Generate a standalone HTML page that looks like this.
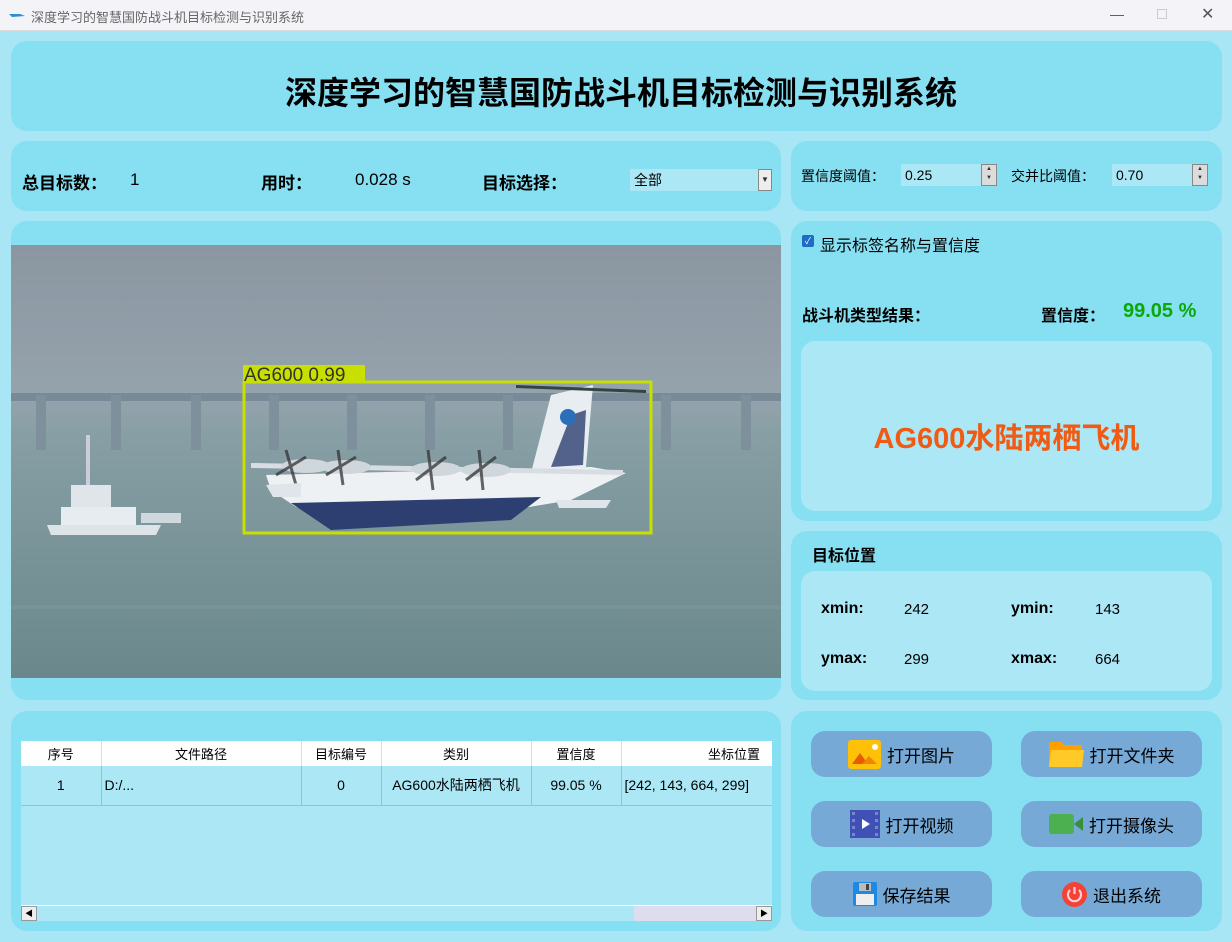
<!DOCTYPE html>
<html><head><meta charset="utf-8"><style>
*{margin:0;padding:0;box-sizing:border-box}
body{width:1232px;height:942px;overflow:hidden;background:#a9e6f5;font-family:"Liberation Sans","Noto Sans CJK SC",sans-serif;position:relative;color:#000}
.a{position:absolute}
.p{position:absolute;background:#87dff2;border-radius:16px}
.btn{position:absolute;width:181px;height:46px;background:#76a9d6;border-radius:14px;font-size:17px;display:flex;align-items:center;justify-content:center;gap:6px}
.b{font-weight:bold}
.spin{position:absolute;height:22px;background:#ace7f6;font-size:14px;line-height:22px;padding-left:4px}
.arr{position:absolute;right:0;top:0;width:16px;height:22px;background:#dcdcdc;border:1px solid #888;font-size:6px;line-height:9px;text-align:center;color:#333}
table{border-collapse:collapse;font-size:14px}
</style></head><body>
<div class="a" style="left:0;top:0;width:1232px;height:31px;background:#f3f3f8;border-bottom:1px solid #ddd"></div>
<svg class="a" style="left:8px;top:9px" width="18" height="12"><path d="M1 5 L4 8 L17 7 L12 5 Z" fill="#2a8fd0"/></svg>
<div class="a" style="left:31px;top:7px;font-size:13px;color:#666">深度学习的智慧国防战斗机目标检测与识别系统</div>
<div class="a" style="left:1110px;top:6px;font-size:14px;color:#555">—</div>
<div class="a" style="left:1157px;top:9px;width:10px;height:10px;border:1px solid #ccc"></div>
<div class="a" style="left:1201px;top:4px;font-size:16px;color:#555">✕</div>

<div class="p" style="left:11px;top:41px;width:1211px;height:90px"></div>
<div class="a b" style="left:0;top:68px;width:1242px;text-align:center;font-size:32px">深度学习的智慧国防战斗机目标检测与识别系统</div>

<div class="p" style="left:11px;top:141px;width:770px;height:70px"></div>
<div class="a b" style="left:22px;top:169px;font-size:17px">总目标数：</div>
<div class="a" style="left:130px;top:170px;font-size:17px">1</div>
<div class="a b" style="left:261px;top:169px;font-size:17px">用时：</div>
<div class="a" style="left:355px;top:170px;font-size:17px">0.028 s</div>
<div class="a b" style="left:482px;top:169px;font-size:17px">目标选择：</div>
<div class="a" style="left:630px;top:169px;width:142px;height:22px;background:#ace7f6;font-size:14px;line-height:22px;padding-left:4px">全部<div class="arr" style="width:14px;background:#eee;font-size:8px;line-height:20px;text-align:center">▼</div></div>

<div class="p" style="left:791px;top:141px;width:431px;height:70px"></div>
<div class="a" style="left:801px;top:166px;font-size:14px">置信度阈值：</div>
<div class="spin" style="left:901px;top:164px;width:96px">0.25<div class="arr">▲<br>▼</div></div>
<div class="a" style="left:1011px;top:166px;font-size:14px">交并比阈值：</div>
<div class="spin" style="left:1112px;top:164px;width:96px">0.70<div class="arr">▲<br>▼</div></div>

<div class="p" style="left:11px;top:221px;width:770px;height:479px"></div>
<svg class="a" style="left:11px;top:245px" width="770" height="433">
<defs><linearGradient id="g" x1="0" y1="0" x2="0" y2="1"><stop offset="0" stop-color="#8b96a1"/><stop offset="0.35" stop-color="#95a3ad"/><stop offset="0.45" stop-color="#869ea4"/><stop offset="1" stop-color="#6a888c"/></linearGradient></defs>
<rect width="770" height="433" fill="url(#g)"/>
<rect x="0" y="148" width="770" height="8" fill="#778a98"/>
<g fill="#7d909c"><rect x="25" y="150" width="10" height="55"/><rect x="100" y="150" width="10" height="55"/><rect x="180" y="150" width="10" height="55"/><rect x="258" y="150" width="10" height="55"/><rect x="336" y="150" width="10" height="55"/><rect x="414" y="150" width="10" height="55"/><rect x="492" y="150" width="10" height="55"/><rect x="650" y="150" width="10" height="55"/><rect x="730" y="150" width="10" height="55"/></g>
<path d="M36 280 L150 280 L145 290 L40 290 Z" fill="#dde4e8"/><path d="M50 262 L125 262 L125 280 L50 280 Z" fill="#e6ecef"/><path d="M60 240 L100 240 L100 262 L60 262 Z" fill="#dfe5e9"/><rect x="75" y="190" width="4" height="50" fill="#ccd"/><rect x="130" y="268" width="40" height="10" fill="#cfd8dc"/>
<rect x="0" y="360" width="770" height="4" fill="#7d979b" opacity="0.6"/>
<path d="M255 230 L580 222 L615 228 L560 255 L500 265 L320 270 L285 262 L260 245 Z" fill="#eef1f4"/>
<path d="M280 258 L530 252 L500 275 L320 285 Z" fill="#2d3f70"/>
<path d="M540 150 L582 140 L575 222 L520 228 Z" fill="#e8edf2"/>
<path d="M560 170 L575 165 L572 220 L540 222 Z" fill="#2d3f70" opacity="0.8"/>
<circle cx="557" cy="172" r="8" fill="#2a6fb8"/>
<path d="M240 218 L612 225 L612 230 L240 223 Z" fill="#d8dde3"/>
<path d="M505 140 L635 145 L635 148 L505 143 Z" fill="#344"/>
<g fill="#cfd6dc"><ellipse cx="295" cy="221" rx="25" ry="7"/><ellipse cx="335" cy="222" rx="25" ry="7"/><ellipse cx="425" cy="224" rx="25" ry="7"/><ellipse cx="475" cy="225" rx="25" ry="7"/></g>
<g stroke="#333" stroke-width="3" opacity="0.75"><line x1="275" y1="205" x2="285" y2="240"/><line x1="265" y1="230" x2="295" y2="212"/><line x1="327" y1="205" x2="332" y2="240"/><line x1="315" y1="230" x2="345" y2="212"/><line x1="417" y1="205" x2="422" y2="245"/><line x1="405" y1="235" x2="435" y2="212"/><line x1="468" y1="205" x2="472" y2="245"/><line x1="455" y1="235" x2="485" y2="212"/></g>
<path d="M255 240 L290 238 L290 252 L262 252 Z" fill="#dfe5ea"/>
<path d="M545 255 L600 255 L595 263 L548 263 Z" fill="#dfe5ea"/>
<rect x="233" y="137" width="407" height="151" fill="none" stroke="#c8e000" stroke-width="3"/>
<rect x="232" y="120" width="122" height="17" fill="#c8e000"/>
<text x="233" y="136" font-size="19" font-family="Liberation Sans" fill="#333">AG600  0.99</text>
</svg>

<div class="p" style="left:791px;top:221px;width:431px;height:300px"></div>
<div class="a" style="left:802px;top:235px;width:12px;height:12px;background:#1d6cc6;border-radius:2px;color:#fff;font-size:9px;text-align:center;line-height:12px">✓</div>
<div class="a" style="left:820px;top:232px;font-size:16px">显示标签名称与置信度</div>
<div class="a b" style="left:802px;top:302px;font-size:16px">战斗机类型结果：</div>
<div class="a b" style="left:1041px;top:302px;font-size:16px">置信度：</div>
<div class="a b" style="left:1123px;top:300px;font-size:20px;color:#0aa80a">99.05 %</div>
<div class="a" style="left:801px;top:341px;width:411px;height:170px;background:#ace7f6;border-radius:14px"></div>
<div class="a b" style="left:801px;top:415px;width:411px;text-align:center;font-size:29px;color:#f15a12">AG600水陆两栖飞机</div>

<div class="p" style="left:791px;top:531px;width:431px;height:169px"></div>
<div class="a b" style="left:812px;top:542px;font-size:16px">目标位置</div>
<div class="a" style="left:801px;top:571px;width:411px;height:120px;background:#ace7f6;border-radius:14px"></div>
<div class="a b" style="left:821px;top:600px;font-size:16px">xmin:</div><div class="a" style="left:904px;top:601px;font-size:15px">242</div>
<div class="a b" style="left:1011px;top:600px;font-size:16px">ymin:</div><div class="a" style="left:1095px;top:601px;font-size:15px">143</div>
<div class="a b" style="left:821px;top:650px;font-size:16px">ymax:</div><div class="a" style="left:904px;top:651px;font-size:15px">299</div>
<div class="a b" style="left:1011px;top:650px;font-size:16px">xmax:</div><div class="a" style="left:1095px;top:651px;font-size:15px">664</div>

<div class="p" style="left:11px;top:711px;width:770px;height:220px"></div>
<div class="a" style="left:21px;top:741px;width:751px;height:165px;background:#ace7f6"></div>
<table class="a" style="left:21px;top:741px;width:751px">
<tr style="background:#fff;height:25px;font-size:13px"><td style="width:80px;text-align:center;border-right:1px solid #ddd">序号</td><td style="width:200px;text-align:center;border-right:1px solid #ddd">文件路径</td><td style="width:80px;text-align:center;border-right:1px solid #ddd">目标编号</td><td style="width:150px;text-align:center;border-right:1px solid #ddd">类别</td><td style="width:90px;text-align:center;border-right:1px solid #ddd">置信度</td><td style="text-align:right;padding-right:12px">坐标位置</td></tr>
<tr style="height:39px;border-bottom:1px solid #8fc4d6"><td style="text-align:center;border-right:1px solid #8fc4d6">1</td><td style="padding-left:3px;border-right:1px solid #8fc4d6">D:/...</td><td style="text-align:center;border-right:1px solid #8fc4d6">0</td><td style="text-align:center;border-right:1px solid #8fc4d6">AG600水陆两栖飞机</td><td style="text-align:center;border-right:1px solid #8fc4d6">99.05 %</td><td style="padding-left:3px">[242, 143, 664, 299]</td></tr>
</table>
<div class="a" style="left:21px;top:905px;width:751px;height:16px;background:#ace7f6;border-top:1px solid #fff"></div>
<div class="a" style="left:21px;top:906px;width:16px;height:15px;background:#eee;border:1px solid #999;font-size:8px;text-align:center;line-height:13px">◀</div>
<div class="a" style="left:634px;top:906px;width:122px;height:15px;background:#dde;"></div>
<div class="a" style="left:756px;top:906px;width:16px;height:15px;background:#eee;border:1px solid #999;font-size:8px;text-align:center;line-height:13px">▶</div>

<div class="p" style="left:791px;top:711px;width:431px;height:220px"></div>
<div class="btn" style="left:811px;top:731px"><svg width="33" height="29"><rect width="33" height="29" rx="3" fill="#ffc107"/><path d="M4 24 L12 13 L20 24Z" fill="#e65c00"/><path d="M14 24 L21 16 L29 24Z" fill="#f0830a"/><circle cx="27" cy="7" r="3" fill="#fff"/></svg>打开图片</div>
<div class="btn" style="left:1021px;top:731px"><svg width="35" height="28"><path d="M0 2 L12 2 L15 5 L33 5 L33 27 L0 27Z" fill="#ffa000"/><path d="M2 10 L35 10 L33 27 L0 27Z" fill="#ffca28"/></svg>打开文件夹</div>
<div class="btn" style="left:811px;top:801px"><svg width="30" height="28"><rect width="30" height="28" fill="#3f51b5"/><g fill="#7986cb"><rect x="2" y="2" width="3" height="3"/><rect x="2" y="9" width="3" height="3"/><rect x="2" y="16" width="3" height="3"/><rect x="2" y="23" width="3" height="3"/><rect x="25" y="2" width="3" height="3"/><rect x="25" y="9" width="3" height="3"/><rect x="25" y="16" width="3" height="3"/><rect x="25" y="23" width="3" height="3"/></g><path d="M12 9 L20 14 L12 19Z" fill="#fff"/></svg>打开视频</div>
<div class="btn" style="left:1021px;top:801px"><svg width="34" height="20"><rect width="25" height="20" rx="3" fill="#4caf50"/><path d="M25 10 L34 3 L34 17Z" fill="#388e3c"/></svg>打开摄像头</div>
<div class="btn" style="left:811px;top:871px"><svg width="24" height="24"><rect width="24" height="24" rx="2" fill="#1e88e5"/><rect x="6" y="1" width="12" height="8" fill="#bbb"/><rect x="13" y="2" width="3" height="6" fill="#444"/><rect x="3" y="12" width="18" height="11" fill="#eee"/></svg>保存结果</div>
<div class="btn" style="left:1021px;top:871px"><svg width="25" height="25"><circle cx="12.5" cy="12.5" r="12.5" fill="#f44336"/><path d="M8 8 A6.5 6.5 0 1 0 17 8" fill="none" stroke="#ffcdd2" stroke-width="2.2"/><line x1="12.5" y1="5" x2="12.5" y2="12" stroke="#ffcdd2" stroke-width="2.2"/></svg>退出系统</div>
</body></html>
